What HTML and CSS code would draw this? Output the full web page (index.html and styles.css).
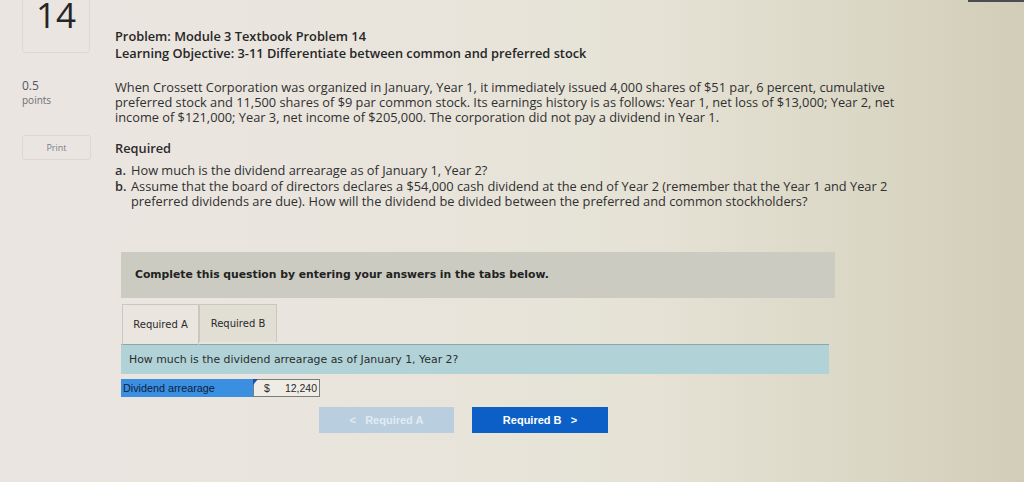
FILE: index.html
```html
<!DOCTYPE html>
<html>
<head>
<meta charset="utf-8">
<link rel="stylesheet" href="styles.css">
</head>
<body>
<div class="topbar"></div>
<div class="page">
  <aside class="side">
    <div class="qnum">14</div>
    <div class="points"><div class="pval">0.5</div><div class="plabel">points</div></div>
    <div class="print">Print</div>
  </aside>
  <main class="main">
    <div class="title">Problem: Module 3 Textbook Problem 14<br>Learning Objective: 3-11 Differentiate between common and preferred stock</div>
    <p class="para">When Crossett Corporation was organized in January, Year 1, it immediately issued 4,000 shares of $51 par, 6 percent, cumulative preferred stock and 11,500 shares of $9 par common stock. Its earnings history is as follows: Year 1, net loss of $13,000; Year 2, net income of $121,000; Year 3, net income of $205,000. The corporation did not pay a dividend in Year 1.</p>
    <div class="req">Required</div>
    <ol class="list">
      <li><b>a.</b><span>How much is the dividend arrearage as of January 1, Year 2?</span></li>
      <li><b>b.</b><span>Assume that the board of directors declares a $54,000 cash dividend at the end of Year 2 (remember that the Year 1 and Year 2 preferred dividends are due). How will the dividend be divided between the preferred and common stockholders?</span></li>
    </ol>
    <div class="panel">
      <div class="instr">Complete this question by entering your answers in the tabs below.</div>
      <div class="tabs">
        <div class="tab active">Required A</div>
        <div class="tab">Required B</div>
      </div>
      <div class="qbar">How much is the dividend arrearage as of January 1, Year 2?</div>
      <div class="row">
        <div class="label">Dividend arrearage</div>
        <div class="input"><span class="flag"></span><span>$</span><span>12,240</span></div>
      </div>
      <div class="nav">
        <div class="btn prev">&lt;&nbsp;&nbsp; Required A</div>
        <div class="btn next">Required B &nbsp;&nbsp;&gt;</div>
      </div>
    </div>
  </main>
</div>
</body>
</html>
```
FILE: styles.css
```css
html, body {
  margin: 0;
  padding: 0;
  height: 100%;
  overflow: hidden;
}
body {
  background: linear-gradient(to right, #ebe5e1 0%, #e9e5dd 35%, #e5e2d5 65%, #dad7c5 85%, #d2cdb8 100%);
  font-family: "Open Sans", Lato, sans-serif;
  color: #2b2b2b;
  position: relative;
}
.topbar {
  position: absolute;
  top: 0;
  left: 968px;
  width: 56px;
  height: 2px;
  background: #4a4d52;
}
.page {
  display: flex;
}
.side {
  width: 93px;
  padding-left: 22px;
  box-sizing: border-box;
  flex: none;
}
.qnum {
  width: 68px;
  height: 73px;
  margin-top: -20px;
  box-sizing: border-box;
  border: 1px solid #ddd8d2;
  border-radius: 3px;
  text-align: center;
  font-family: "Open Sans", sans-serif;
  font-size: 35px;
  line-height: 1;
  padding-top: 16px;
  color: #262626;
}
.points {
  margin-top: 26px;
  color: #4e5866;
}
.pval { font-size: 12px; line-height: 14px; }
.plabel { font-size: 10px; line-height: 14px; color: #6a6f78; }
.print {
  margin-top: 28px;
  width: 69px;
  height: 25px;
  box-sizing: border-box;
  border: 1px solid #dcd7d1;
  border-radius: 3px;
  font-size: 9px;
  color: #7a7d88;
  text-align: center;
  line-height: 23px;
}
.main {
  padding-left: 22px;
  padding-top: 28px;
  flex: 1;
}
.title {
  font-weight: 600;
  font-size: 12.8px;
  line-height: 17px;
  color: #262626;
}
.para {
  margin: 18px 0 0;
  width: 790px;
  font-size: 12.8px;
  line-height: 15px;
  color: #303030;
}
.req {
  margin-top: 15px;
  font-weight: 600;
  font-size: 12.8px;
  line-height: 17px;
}
.list {
  list-style: none;
  margin: 6px 0 0;
  padding: 0;
  width: 790px;
  font-size: 12.8px;
  line-height: 15.5px;
  color: #303030;
}
.list li { display: flex; }
.list b { width: 16px; flex: none; font-weight: 600; }
.panel {
  margin-top: 42px;
  margin-left: 6px;
  font-family: "DejaVu Sans", Verdana, sans-serif;
}
.instr {
  width: 714px;
  height: 46px;
  box-sizing: border-box;
  background: #cbcbc1;
  padding-left: 14px;
  line-height: 46px;
  font-weight: bold;
  font-size: 10.8px;
  color: #222;
}
.tabs {
  display: flex;
  align-items: flex-start;
  margin-top: 6px;
  margin-left: 1px;
}
.tab {
  width: 78px;
  height: 38px;
  box-sizing: border-box;
  border: 1px solid #c9c7c0;
  border-bottom: none;
  font-size: 10px;
  line-height: 38px;
  text-align: center;
  background: #e1ded4;
  color: #2a2a2a;
}
.tab.active {
  width: 77px;
  height: 41px;
  background: transparent;
  line-height: 40px;
}
.qbar {
  width: 708px;
  height: 30px;
  box-sizing: border-box;
  background: #b1d3d8;
  border-top: 1px solid #8ea6ab;
  padding-left: 8px;
  line-height: 29px;
  font-size: 10.9px;
  color: #2c2c2c;
  margin-top: -1px;
}
.row {
  display: flex;
  margin-top: 5px;
  height: 18px;
}
.label {
  width: 132px;
  background: #3a8fe0;
  font-family: "Liberation Sans", Arial, sans-serif;
  font-size: 10.8px;
  line-height: 18px;
  padding-left: 2px;
  box-sizing: border-box;
  color: #0d2140;
}
.input {
  position: relative;
  width: 67px;
  box-sizing: border-box;
  border: 1px solid #7b7b7b;
  background: #efece6;
  display: flex;
  justify-content: space-between;
  padding: 0 2px 0 10px;
  font-family: "Liberation Sans", Arial, sans-serif;
  font-size: 10.5px;
  line-height: 16px;
  color: #2a2a2a;
}
.flag {
  position: absolute;
  left: -1px;
  top: -1px;
  width: 0;
  height: 0;
  border-top: 6px solid #1f4fa3;
  border-right: 5px solid transparent;
}
.nav {
  display: flex;
  gap: 18px;
  margin-top: 10px;
  margin-left: 198px;
}
.btn {
  width: 135px;
  height: 26px;
  box-sizing: border-box;
  text-align: center;
  line-height: 26px;
  font-family: "Liberation Sans", Arial, sans-serif;
  font-weight: bold;
  font-size: 11px;
}
.btn.prev {
  background: #b9cfdf;
  color: #e2ebf2;
}
.btn.next {
  width: 136px;
  background: #0b5fc6;
  color: #ffffff;
}
```
